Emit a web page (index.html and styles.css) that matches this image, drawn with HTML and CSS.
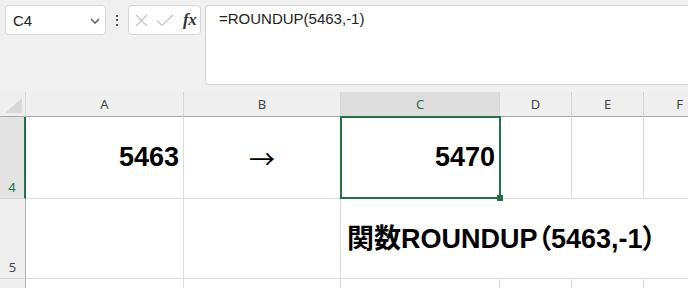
FILE: index.html
```html
<!DOCTYPE html>
<html lang="ja">
<head>
<meta charset="utf-8">
<link rel="stylesheet" href="styles.css">
</head>
<body>
<div class="app">
  <div class="toolbar">
    <div class="namebox">
      <span class="name">C4</span>
      <svg class="chev" width="10" height="6" viewBox="0 0 10 6"><polyline points="1,1 5,5 9,1" fill="none" stroke="#555" stroke-width="1.3"/></svg>
    </div>
    <div class="dots"><i></i><i></i><i></i></div>
    <div class="fxbox">
      <svg class="ico" width="13" height="13" viewBox="0 0 13 13"><path d="M1 1L12 12M12 1L1 12" stroke="#c4c4c4" stroke-width="1.2" fill="none"/></svg>
      <svg class="ico" width="18" height="13" viewBox="0 0 18 13"><polyline points="1,6.5 6,11.5 17,1" stroke="#c4c4c4" stroke-width="1.2" fill="none"/></svg>
      <span class="fx">fx</span>
    </div>
    <div class="formula">=ROUNDUP(5463,-1)</div>
  </div>
  <div class="sheet">
    <div class="corner"><span class="tri"></span></div>
    <div class="colhdr">A</div>
    <div class="colhdr">B</div>
    <div class="colhdr sel">C</div>
    <div class="colhdr">D</div>
    <div class="colhdr">E</div>
    <div class="colhdr">F</div>

    <div class="rowhdr sel">4</div>
    <div class="cell num">5463</div>
    <div class="cell arrow">→</div>
    <div class="cell num active">5470<span class="handle"></span></div>
    <div class="cell"></div>
    <div class="cell"></div>
    <div class="cell"></div>

    <div class="rowhdr">5</div>
    <div class="cell"></div>
    <div class="cell"></div>
    <div class="cell label">関数ROUNDUP（5463,-1）</div>

    <div class="rowhdr"></div>
    <div class="cell"></div>
    <div class="cell"></div>
    <div class="cell"></div>
    <div class="cell"></div>
    <div class="cell"></div>
    <div class="cell"></div>
  </div>
</div>
</body>
</html>
```
FILE: styles.css
```css
* { box-sizing: border-box; }
html, body { margin: 0; padding: 0; }
body {
  width: 688px;
  height: 288px;
  overflow: hidden;
  background: #f0f0f0;
  font-family: "Liberation Sans", "Noto Sans CJK JP", sans-serif;
}
.app { width: 688px; height: 288px; overflow: hidden; }

.toolbar {
  display: flex;
  align-items: flex-start;
  padding: 5px 0 0 5px;
  height: 92px;
}
.namebox {
  width: 101px;
  height: 30px;
  background: #fff;
  border: 1px solid #d6d6d6;
  border-radius: 4px;
  display: flex;
  align-items: center;
  justify-content: space-between;
  padding: 0 5px 0 7px;
}
.name { font-size: 15px; color: #222; }
.chev { margin-top: 1px; }
.dots {
  width: 22px;
  height: 30px;
  display: flex;
  flex-direction: column;
  align-items: center;
  justify-content: center;
  gap: 2.5px;
}
.dots i { display: block; width: 2px; height: 2px; background: #555; }
.fxbox {
  width: 73px;
  height: 30px;
  background: #fff;
  border: 1px solid #d6d6d6;
  border-radius: 4px;
  display: flex;
  align-items: center;
  padding: 0 0 0 6px;
  gap: 8px;
}
.fx {
  font-family: "Liberation Serif", serif;
  font-style: italic;
  font-weight: bold;
  font-size: 17px;
  color: #333;
  margin-left: 1px;
  letter-spacing: -0.5px;
}
.formula {
  flex: 1;
  margin-left: 4px;
  margin-right: -6px;
  height: 80px;
  background: #fff;
  border: 1px solid #d2d2d2;
  border-radius: 4px 0 0 4px;
  padding: 4px 0 0 13px;
  font-size: 15px;
  line-height: 18px;
  color: #222;
}

.sheet {
  display: grid;
  grid-template-columns: 26px 158px 157px 159px 72px 72px 72px;
  grid-template-rows: 25px 82px 80px 40px;
  background: #fff;
  width: 716px;
}
.corner {
  background: #efefef;
  border-right: 1px solid #d8d8d8;
  border-bottom: 1px solid #a8a8a8;
  position: relative;
}
.tri {
  position: absolute;
  right: 3px;
  bottom: 3px;
  width: 0;
  height: 0;
  border-left: 17px solid transparent;
  border-bottom: 15px solid #d9d9d9;
}
.colhdr {
  background: #efefef;
  border-right: 1px solid #d6d6d6;
  border-bottom: 1px solid #a8a8a8;
  display: flex;
  align-items: center;
  justify-content: center;
  font-family: "Noto Sans", "Liberation Sans", sans-serif;
  font-size: 13px;
  color: #444;
}
.colhdr.sel { background: #dddddd; color: #217346; border-bottom-color: #217346; }
.rowhdr {
  background: #efefef;
  border-right: 1px solid #b0b0b0;
  border-bottom: 1px solid #d6d6d6;
  display: flex;
  align-items: flex-end;
  justify-content: center;
  padding-bottom: 2px;
  font-family: "Noto Sans", "Liberation Sans", sans-serif;
  font-size: 13px;
  color: #444;
}
.rowhdr.sel { background: #e3e3e3; color: #217346; border-right: 2px solid #217346; }
.cell {
  border-right: 1px solid #dcdcdc;
  border-bottom: 1px solid #dcdcdc;
  display: flex;
  align-items: center;
  font-weight: bold;
  font-size: 27px;
  color: #000;
  white-space: nowrap;
}
.num { justify-content: flex-end; padding-right: 4px; }
.arrow {
  justify-content: center;
  font-family: "Noto Sans CJK JP", sans-serif;
  font-weight: normal;
  font-size: 26px;
}
.active { position: relative; }
.active::after {
  content: "";
  position: absolute;
  left: -1px;
  top: -1px;
  right: -2px;
  bottom: -1px;
  border: 2px solid #217346;
  pointer-events: none;
}
.handle {
  position: absolute;
  right: -4px;
  bottom: -3px;
  width: 6px;
  height: 6px;
  background: #217346;
  z-index: 2;
}
.label {
  grid-column: span 4;
  padding-left: 6px;
  padding-bottom: 4px;
  font-feature-settings: "palt";
  border-right: none;
}
```
